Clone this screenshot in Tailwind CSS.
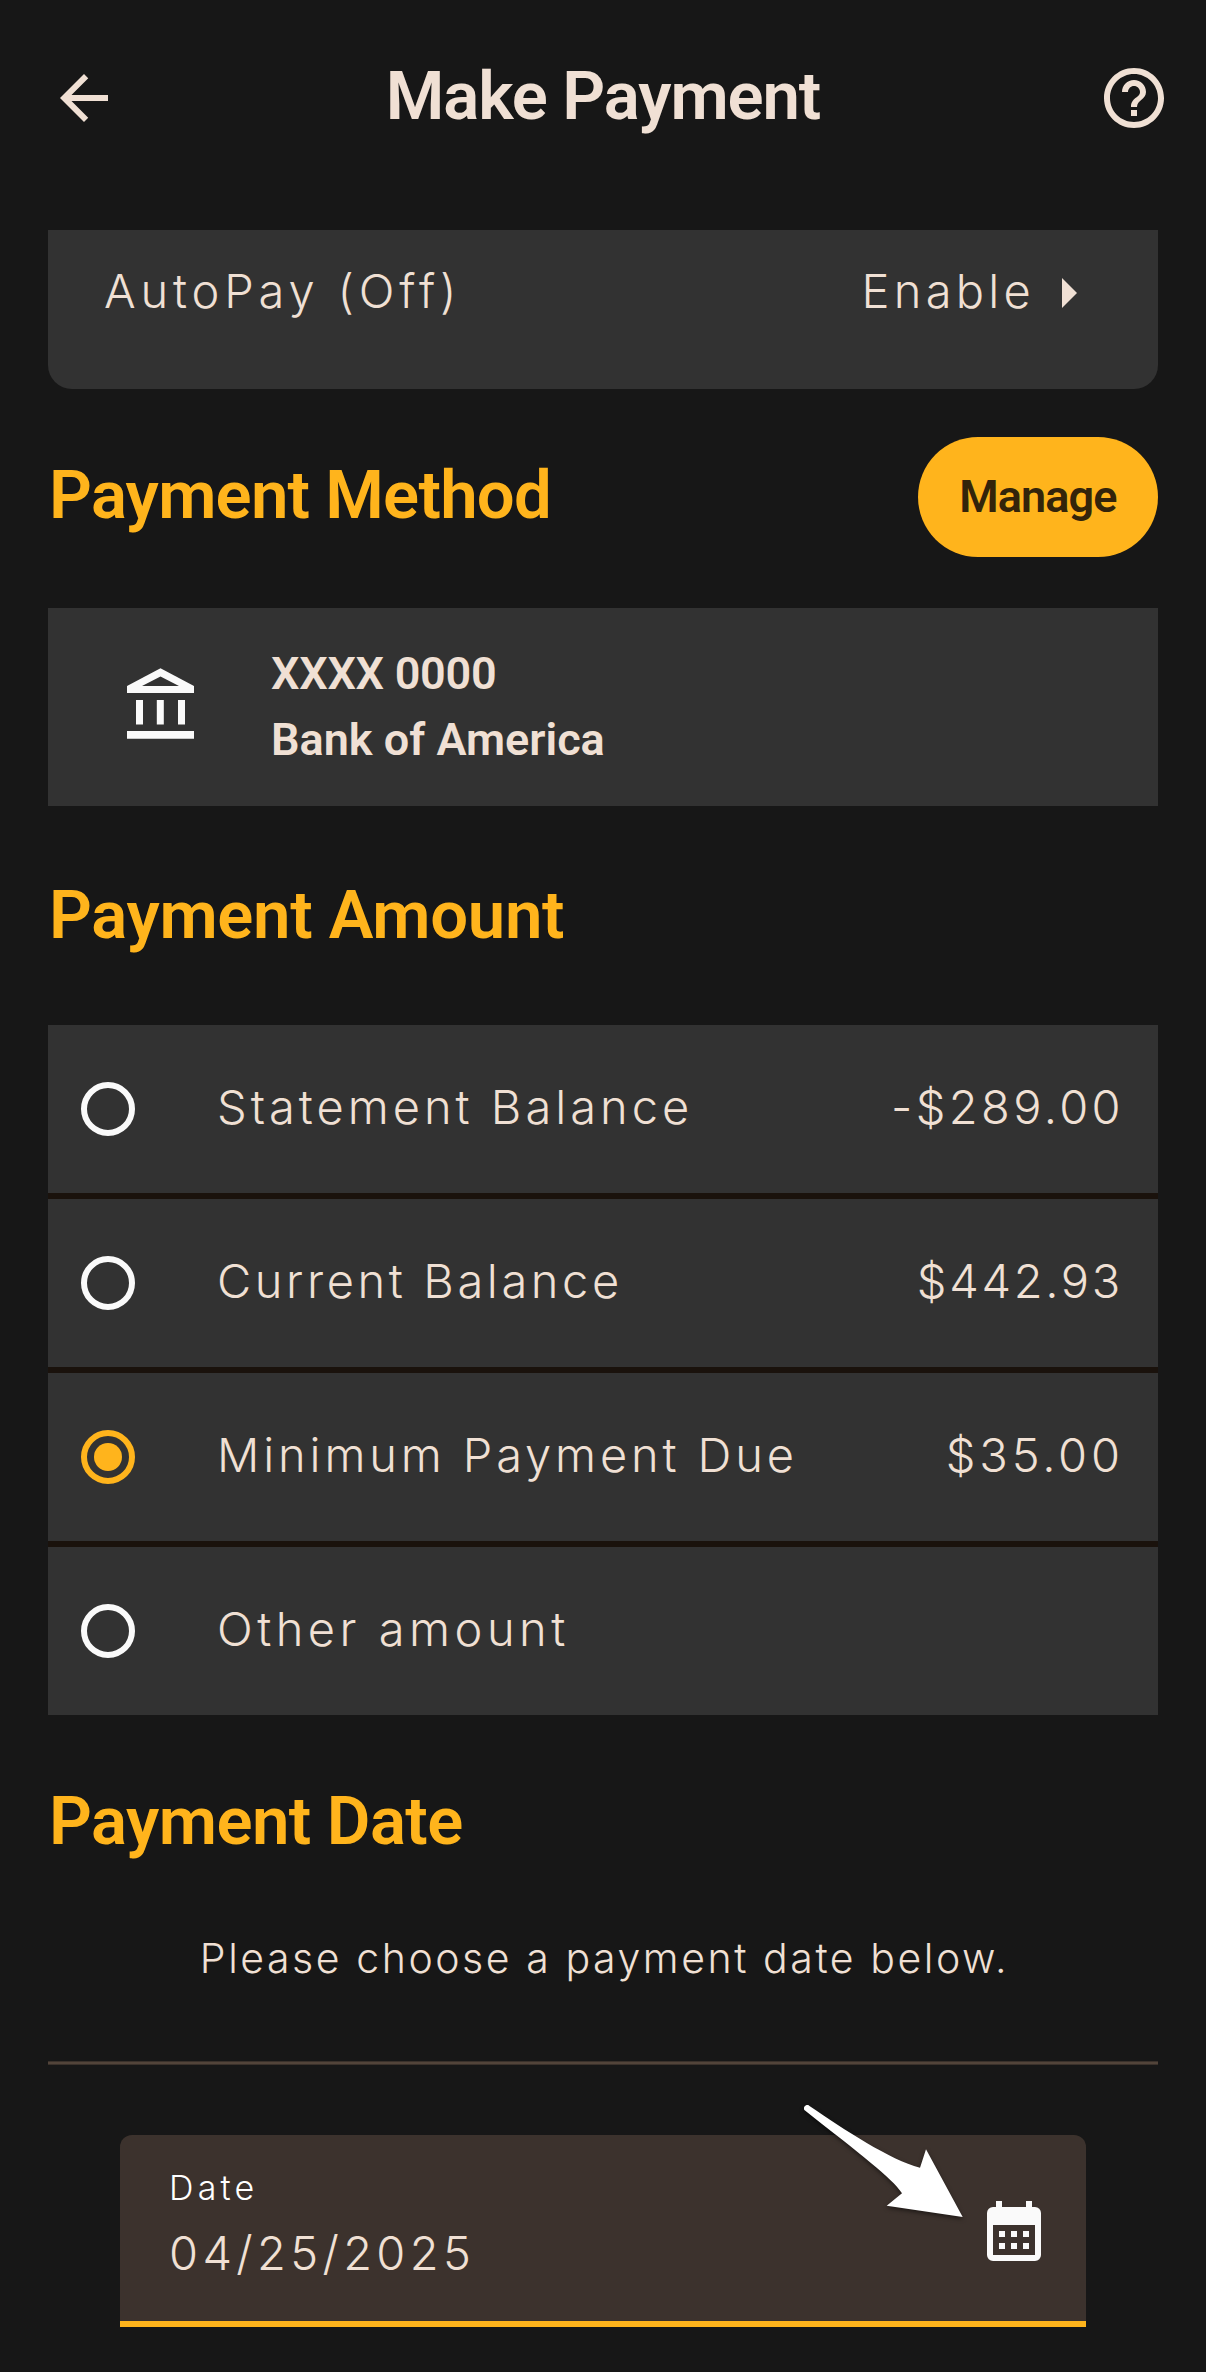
<!DOCTYPE html>
<html lang="en">
<head>
    <meta charset="UTF-8"/>
    <meta name="viewport" content="width=device-width, initial-scale=1.0"/>
    <title>Make Payment</title>
    <script src="https://cdn.jsdelivr.net/npm/@tailwindcss/browser@4"></script>
</head>
<body class="bg-[#171717] text-[#f0e0d4] font-['Inter',sans-serif] font-light">
<div class="w-[1206px] h-[2372px] overflow-hidden">
    <header class="h-[196px] pl-12 pr-9 flex items-center">
        <svg class="size-[72px]" viewBox="0 0 24 24" fill="currentColor">
            <path d="M20 11H7.83l5.59-5.59L12 4l-8 8 8 8 1.41-1.41L7.83 13H20v-2z"/>
        </svg>
        <h1 class="flex-1 pr-[12px] pb-1 text-center font-['Roboto',sans-serif] font-semibold text-[67px] tracking-[-1.1px]">Make Payment</h1>
        <svg class="size-[72px]" viewBox="0 0 24 24" fill="currentColor">
            <path d="M11 18h2v-2h-2v2zm1-16C6.48 2 2 6.48 2 12s4.48 10 10 10 10-4.48 10-10S17.52 2 12 2zm0 18c-4.41 0-8-3.59-8-8s3.59-8 8-8 8 3.59 8 8-3.59 8-8 8zm0-14c-2.21 0-4 1.79-4 4h2c0-1.1.9-2 2-2s2 .9 2 2c0 2-3 1.75-3 5h2c0-2.25 3-2.5 3-5 0-2.21-1.79-4-4-4z"/>
        </svg>
    </header>

    <main class="px-12 pt-[34px]">
        <!-- AutoPay -->
        <div class="h-[159px] pt-[37px] pl-14 pr-[81px] flex items-start justify-between bg-[#323232] rounded-b-3xl text-[47px] leading-[48px]">
            <span class="tracking-[4.85px]">AutoPay (Off)</span>
            <div class="flex items-center gap-[27px]">
                <span class="tracking-[4.26px]">Enable</span>
                <svg class="w-[15px] h-[30px] mt-[3px]" viewBox="0 0 15 30" fill="currentColor">
                    <path d="M0 0l15 15L0 30z"/>
                </svg>
            </div>
        </div>

        <!-- Payment Method -->
        <div class="mt-12 flex items-center justify-between font-['Roboto',sans-serif] font-semibold">
            <h2 class="pl-px pb-1 text-[67px] leading-[80px] tracking-[-0.75px] text-[#ffb41c]">Payment Method</h2>
            <button class="w-60 h-[120px] rounded-full bg-[#ffb41c] text-[#33240a] text-[45px] tracking-[-0.89px]">Manage</button>
        </div>
        <div class="mt-[51px] h-[198px] pl-[79px] flex items-center gap-[77px] bg-[#323232]">
            <svg class="w-[67px] h-[71px] mb-[7px]" viewBox="0 0 67 71" fill="#fafafa">
                <path fill-rule="evenodd" d="M33.5 0.3L67 18v7H0v-7zM33.5 8.5L15 18h37z"/>
                <path d="M9 32h7v24.5H9zM29.8 32h7v24.5h-7zM51 32h7v24.5h-7zM0 63h67v7.7H0z"/>
            </svg>
            <div class="font-['Roboto',sans-serif] font-semibold text-[45px] leading-[66px]">
                <p class="tracking-[-0.3px]">XXXX 0000</p>
                <p>Bank of America</p>
            </div>
        </div>

        <!-- Payment Amount -->
        <h2 class="h-[219px] pl-px flex items-center font-['Roboto',sans-serif] font-semibold text-[67px] tracking-[-0.31px] text-[#ffb41c]">Payment Amount</h2>
        <div class="flex flex-col gap-1.5 bg-[#1a120c] text-[47px] leading-[56px]">
            <div class="h-[168px] pl-[33px] pr-[34px] flex items-center bg-[#323232]">
                <span class="size-[54px] rounded-full border-6 border-[#fafafa]"></span>
                <span class="pl-[82px] pb-1 flex-1 tracking-[4px]">Statement Balance</span>
                <span class="pb-1 tracking-[3.4px]">-$289.00</span>
            </div>
            <div class="h-[168px] pl-[33px] pr-[35px] flex items-center bg-[#323232]">
                <span class="size-[54px] rounded-full border-6 border-[#fafafa]"></span>
                <span class="pl-[82px] pb-1 flex-1 tracking-[3.6px]">Current Balance</span>
                <span class="pb-1 tracking-[2.7px]">$442.93</span>
            </div>
            <div class="h-[168px] pl-[33px] pr-[34px] flex items-center bg-[#323232]">
                <span class="size-[54px] rounded-full border-6 border-[#ffb41c] grid place-items-center">
                    <span class="size-[28px] rounded-full bg-[#ffb41c]"></span>
                </span>
                <span class="pl-[82px] pb-1 flex-1 tracking-[3.87px]">Minimum Payment Due</span>
                <span class="pb-1 tracking-[3.9px]">$35.00</span>
            </div>
            <div class="h-[168px] pl-[33px] pr-[34px] flex items-center bg-[#323232]">
                <span class="size-[54px] rounded-full border-6 border-[#fafafa]"></span>
                <span class="pl-[82px] pb-1 flex-1 tracking-[4.5px]">Other amount</span>
            </div>
        </div>

        <!-- Payment Date -->
        <h2 class="h-[212px] pl-px flex items-center font-['Roboto',sans-serif] font-semibold text-[67px] tracking-[-0.55px] text-[#ffb41c]">Payment Date</h2>
        <p class="pl-[3px] text-center text-[41px] leading-[62px] tracking-[2.56px] whitespace-nowrap">Please choose a payment date below.</p>
        <div class="mt-[72px] h-1 border-y border-[#3a312b] bg-[#52443a]"></div>

        <div class="relative mt-[70px] mx-[72px] h-[192px] pl-12 pr-[45px] flex justify-between bg-[#3c322d] border-b-6 border-[#ffb41c] rounded-t-xl">
            <div class="pt-[31px]">
                <p class="pl-px text-[34px] leading-[44px] tracking-[4.2px] text-white">Date</p>
                <p class="mt-[13px] pl-px text-[47px] leading-[60px] tracking-[4.35px]">04/25/2025</p>
            </div>
            <svg class="mt-[66px] w-[54px] h-[60px]" viewBox="0 0 54 60" fill="#fafafa">
                <path d="M9 0h6v8H9zM39 0h6v8h-6z"/>
                <path fill-rule="evenodd" d="M6 6h42a6 6 0 0 1 6 6v42a6 6 0 0 1-6 6H6a6 6 0 0 1-6-6V12a6 6 0 0 1 6-6zM6 24v30h42V24z"/>
                <path d="M12 30h6v6h-6zM24 30h6v6h-6zM36 30h6v6h-6zM12 42h6v6h-6zM24 42h6v6h-6zM36 42h6v6h-6z"/>
            </svg>
            <!-- arrow pointing at the calendar -->
            <svg class="absolute left-[680px] -top-[35px] w-[170px] h-[125px] overflow-visible drop-shadow-[0_2px_2px_rgba(0,0,0,0.5)]" viewBox="0 0 170 125" fill="#fff">
                <path d="M5 10.6A3 3 0 0 1 9.5 6C45 30 90 60 120 67.7L126 49.3L162.7 117L86.7 105.7L102 93.3C92 78 60 54 5 10.6z"/>
            </svg>
        </div>
    </main>
</div>
</body>
</html>
